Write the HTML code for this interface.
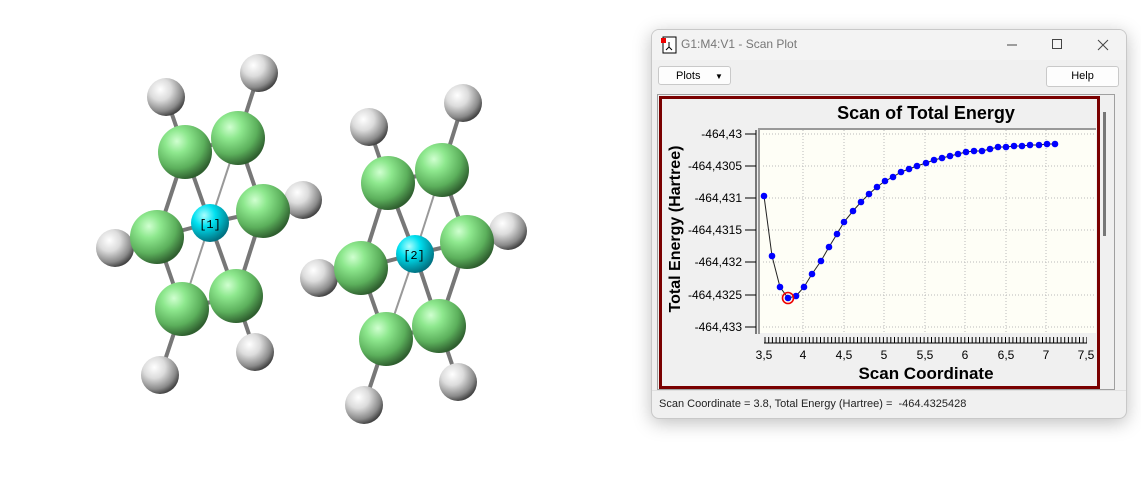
<!DOCTYPE html>
<html><head><meta charset="utf-8"><style>
body{margin:0;width:1141px;height:485px;background:#fff;position:relative;overflow:hidden;font-family:"Liberation Sans",sans-serif}
.win{position:absolute;left:651px;top:29px;width:474px;height:388px;background:#f0f0f0;border:1px solid #c8c8c8;border-radius:8px;box-shadow:0 4px 18px rgba(0,0,0,.25);overflow:hidden}
.tb{position:absolute;left:0;top:0;width:474px;height:30px;background:#f3f3f3}
.t{position:absolute;left:29px;top:7px;font-size:12px;color:#777}
.btn{position:absolute;background:#fdfdfd;border:1px solid #c9c9c9;border-radius:3px;font-size:11px;color:#000;text-align:center;line-height:19px}
.st{position:absolute;left:7px;top:368px;font-size:11px;color:#222}
</style></head><body>
<svg width="560" height="485" style="position:absolute;left:0;top:0">
<defs>
<radialGradient id="g" cx="35%" cy="30%" r="72%"><stop offset="0" stop-color="#d0ffd0"/><stop offset=".3" stop-color="#8ee88e"/><stop offset=".7" stop-color="#5cb05c"/><stop offset="1" stop-color="#2f5f2f"/></radialGradient>
<radialGradient id="h" cx="35%" cy="30%" r="72%"><stop offset="0" stop-color="#fff"/><stop offset=".4" stop-color="#dcdcdc"/><stop offset=".8" stop-color="#8a8a8a"/><stop offset="1" stop-color="#444"/></radialGradient>
<radialGradient id="c" cx="35%" cy="30%" r="72%"><stop offset="0" stop-color="#aaffff"/><stop offset=".4" stop-color="#00e0f0"/><stop offset="1" stop-color="#007080"/></radialGradient>
</defs>
<g stroke="#777" stroke-width="4">
<line x1="185" y1="152" x2="166" y2="97"/><line x1="238" y1="138" x2="259" y2="73"/><line x1="263" y1="211" x2="303" y2="200"/><line x1="157" y1="237" x2="115" y2="248"/><line x1="182" y1="309" x2="160" y2="375"/><line x1="236" y1="296" x2="255" y2="352"/>
<line x1="185" y1="152" x2="238" y2="138"/><line x1="238" y1="138" x2="263" y2="211"/><line x1="263" y1="211" x2="236" y2="296"/><line x1="236" y1="296" x2="182" y2="309"/><line x1="182" y1="309" x2="157" y2="237"/><line x1="157" y1="237" x2="185" y2="152"/>
<line x1="210" y1="223" x2="185" y2="152"/><line x1="210" y1="223" x2="263" y2="211"/><line x1="210" y1="223" x2="236" y2="296"/><line x1="210" y1="223" x2="157" y2="237"/>
<line x1="388" y1="183" x2="369" y2="127"/><line x1="442" y1="170" x2="463" y2="103"/><line x1="467" y1="242" x2="508" y2="231"/><line x1="361" y1="268" x2="319" y2="278"/><line x1="386" y1="339" x2="364" y2="405"/><line x1="439" y1="326" x2="458" y2="382"/>
<line x1="388" y1="183" x2="442" y2="170"/><line x1="442" y1="170" x2="467" y2="242"/><line x1="467" y1="242" x2="439" y2="326"/><line x1="439" y1="326" x2="386" y2="339"/><line x1="386" y1="339" x2="361" y2="268"/><line x1="361" y1="268" x2="388" y2="183"/>
<line x1="415" y1="254" x2="388" y2="183"/><line x1="415" y1="254" x2="467" y2="242"/><line x1="415" y1="254" x2="439" y2="326"/><line x1="415" y1="254" x2="361" y2="268"/>
</g>
<g stroke="#999" stroke-width="2"><line x1="210" y1="223" x2="238" y2="138"/><line x1="210" y1="223" x2="182" y2="309"/><line x1="415" y1="254" x2="442" y2="170"/><line x1="415" y1="254" x2="386" y2="339"/></g>
<g fill="url(#h)"><circle cx="166" cy="97" r="19"/><circle cx="259" cy="73" r="19"/><circle cx="303" cy="200" r="19"/><circle cx="115" cy="248" r="19"/><circle cx="160" cy="375" r="19"/><circle cx="255" cy="352" r="19"/>
<circle cx="369" cy="127" r="19"/><circle cx="463" cy="103" r="19"/><circle cx="508" cy="231" r="19"/><circle cx="319" cy="278" r="19"/><circle cx="364" cy="405" r="19"/><circle cx="458" cy="382" r="19"/></g>
<g fill="url(#g)"><circle cx="238" cy="138" r="27"/><circle cx="185" cy="152" r="27"/><circle cx="263" cy="211" r="27"/><circle cx="157" cy="237" r="27"/><circle cx="236" cy="296" r="27"/><circle cx="182" cy="309" r="27"/>
<circle cx="442" cy="170" r="27"/><circle cx="388" cy="183" r="27"/><circle cx="467" cy="242" r="27"/><circle cx="361" cy="268" r="27"/><circle cx="439" cy="326" r="27"/><circle cx="386" cy="339" r="27"/></g>
<g fill="url(#c)"><circle cx="210" cy="223" r="19"/><circle cx="415" cy="254" r="19"/></g>
<g font-size="12" font-family="Liberation Mono,monospace" fill="#000" text-anchor="middle"><text x="210" y="228">[1]</text><text x="414" y="259">[2]</text></g>
</svg>
<div class="win">
<div class="tb">
<svg width="20" height="20" style="position:absolute;left:8px;top:6px"><rect x="3" y="1" width="13" height="16" fill="#fff" stroke="#000"/><rect x="1" y="2" width="5" height="5" fill="#e00"/><path d="M9 6v5M6 14l3-3 3 3" stroke="#000" fill="none"/></svg>
<div class="t">G1:M4:V1 - Scan Plot</div>
<svg width="474" height="30" style="position:absolute;left:0;top:0" stroke="#444" fill="none"><line x1="355" y1="15" x2="365" y2="15"/><rect x="400.5" y="9.5" width="9" height="9"/><path d="M446 10l10 10M456 10l-10 10"/></svg>
</div>
<div class="btn" style="left:6px;top:36px;height:19px;text-align:left;padding-left:17px;box-sizing:border-box;width:73px">Plots<span style="position:absolute;left:56px;top:0;font-size:8px">▼</span></div>
<div class="btn" style="left:394px;top:36px;width:71px;height:19px">Help</div>
<div style="position:absolute;left:5px;top:64px;width:456px;height:294px;border:1px solid #a0a0a0;background:#f0f0f0"></div>
<div style="position:absolute;left:451px;top:82px;width:3px;height:124px;background:#777"></div>
<div style="position:absolute;left:7px;top:66px;width:435px;height:287px;border:3px solid #7a0000;background:#f0f0f0"></div>
<div style="position:absolute;left:0;top:360px;width:474px;height:1px;background:#e0e0e0"></div>
<div class="st">Scan Coordinate = 3.8, Total Energy (Hartree) = &nbsp;-464.4325428</div>
</div>
<svg width="1141" height="485" style="position:absolute;left:0;top:0" font-family="Liberation Sans,sans-serif">
<rect x="760" y="129" width="336" height="204" fill="#fefef6"/>
<g stroke="#bbb" stroke-dasharray="1,2"><line x1="763" y1="166" x2="1095" y2="166"/><line x1="763" y1="198" x2="1095" y2="198"/><line x1="763" y1="230" x2="1095" y2="230"/><line x1="763" y1="262" x2="1095" y2="262"/><line x1="763" y1="295" x2="1095" y2="295"/><line x1="763" y1="327" x2="1095" y2="327"/><line x1="763" y1="134" x2="1095" y2="134"/>
<line x1="803" y1="130" x2="803" y2="332"/><line x1="844" y1="130" x2="844" y2="332"/><line x1="884" y1="130" x2="884" y2="332"/><line x1="925" y1="130" x2="925" y2="332"/><line x1="965" y1="130" x2="965" y2="332"/><line x1="1006" y1="130" x2="1006" y2="332"/><line x1="1046" y1="130" x2="1046" y2="332"/></g>
<line x1="758" y1="129" x2="1096" y2="129" stroke="#999" stroke-width="2"/>
<line x1="759" y1="128" x2="759" y2="334" stroke="#999" stroke-width="2"/>
<line x1="756" y1="130" x2="756" y2="334" stroke="#000"/>
<g stroke="#000"><line x1="745" y1="134" x2="756" y2="134"/><line x1="745" y1="166" x2="756" y2="166"/><line x1="745" y1="198" x2="756" y2="198"/><line x1="745" y1="230" x2="756" y2="230"/><line x1="745" y1="262" x2="756" y2="262"/><line x1="745" y1="295" x2="756" y2="295"/><line x1="745" y1="327" x2="756" y2="327"/>
<line x1="764" y1="343" x2="1087" y2="343"/></g>
<line x1="764.5" y1="340" x2="1087" y2="340" stroke="#000" stroke-width="6" stroke-dasharray="1,2.7"/>
<g font-size="12" text-anchor="end" fill="#000"><text x="742" y="138">-464,43</text><text x="742" y="170">-464,4305</text><text x="742" y="202">-464,431</text><text x="742" y="234">-464,4315</text><text x="742" y="266">-464,432</text><text x="742" y="299">-464,4325</text><text x="742" y="331">-464,433</text></g>
<g font-size="12" text-anchor="middle"><text x="764" y="359">3,5</text><text x="803" y="359">4</text><text x="844" y="359">4,5</text><text x="884" y="359">5</text><text x="925" y="359">5,5</text><text x="965" y="359">6</text><text x="1006" y="359">6,5</text><text x="1046" y="359">7</text><text x="1086" y="359">7,5</text></g>
<text x="926" y="119" font-size="18" font-weight="bold" text-anchor="middle">Scan of Total Energy</text>
<text x="926" y="379" font-size="17" font-weight="bold" text-anchor="middle">Scan Coordinate</text>
<text transform="translate(680,229) rotate(-90)" font-size="16" font-weight="bold" text-anchor="middle">Total Energy (Hartree)</text>
<polyline fill="none" stroke="#222" stroke-width="1" points="764,196 772,256 780,287 788,298 796,296 804,287 812,274 821,261 829,247 837,234 844,222 853,211 861,202 869,194 877,187 885,181 893,177 901,172 909,169 917,166 926,163 934,160 942,158 950,156 958,154 966,152 974,151 982,151 990,149 998,147 1006,147 1014,146 1022,146 1030,145 1039,145 1047,144 1055,144"/>
<g fill="#0000ff"><circle cx="764" cy="196" r="3.3"/><circle cx="772" cy="256" r="3.3"/><circle cx="780" cy="287" r="3.3"/><circle cx="788" cy="298" r="3.3"/><circle cx="796" cy="296" r="3.3"/><circle cx="804" cy="287" r="3.3"/><circle cx="812" cy="274" r="3.3"/><circle cx="821" cy="261" r="3.3"/><circle cx="829" cy="247" r="3.3"/><circle cx="837" cy="234" r="3.3"/><circle cx="844" cy="222" r="3.3"/><circle cx="853" cy="211" r="3.3"/><circle cx="861" cy="202" r="3.3"/><circle cx="869" cy="194" r="3.3"/><circle cx="877" cy="187" r="3.3"/><circle cx="885" cy="181" r="3.3"/><circle cx="893" cy="177" r="3.3"/><circle cx="901" cy="172" r="3.3"/><circle cx="909" cy="169" r="3.3"/><circle cx="917" cy="166" r="3.3"/><circle cx="926" cy="163" r="3.3"/><circle cx="934" cy="160" r="3.3"/><circle cx="942" cy="158" r="3.3"/><circle cx="950" cy="156" r="3.3"/><circle cx="958" cy="154" r="3.3"/><circle cx="966" cy="152" r="3.3"/><circle cx="974" cy="151" r="3.3"/><circle cx="982" cy="151" r="3.3"/><circle cx="990" cy="149" r="3.3"/><circle cx="998" cy="147" r="3.3"/><circle cx="1006" cy="147" r="3.3"/><circle cx="1014" cy="146" r="3.3"/><circle cx="1022" cy="146" r="3.3"/><circle cx="1030" cy="145" r="3.3"/><circle cx="1039" cy="145" r="3.3"/><circle cx="1047" cy="144" r="3.3"/><circle cx="1055" cy="144" r="3.3"/></g>
<circle cx="788" cy="298" r="5.5" fill="none" stroke="#e00" stroke-width="1.6"/>
</svg>
</body></html>
